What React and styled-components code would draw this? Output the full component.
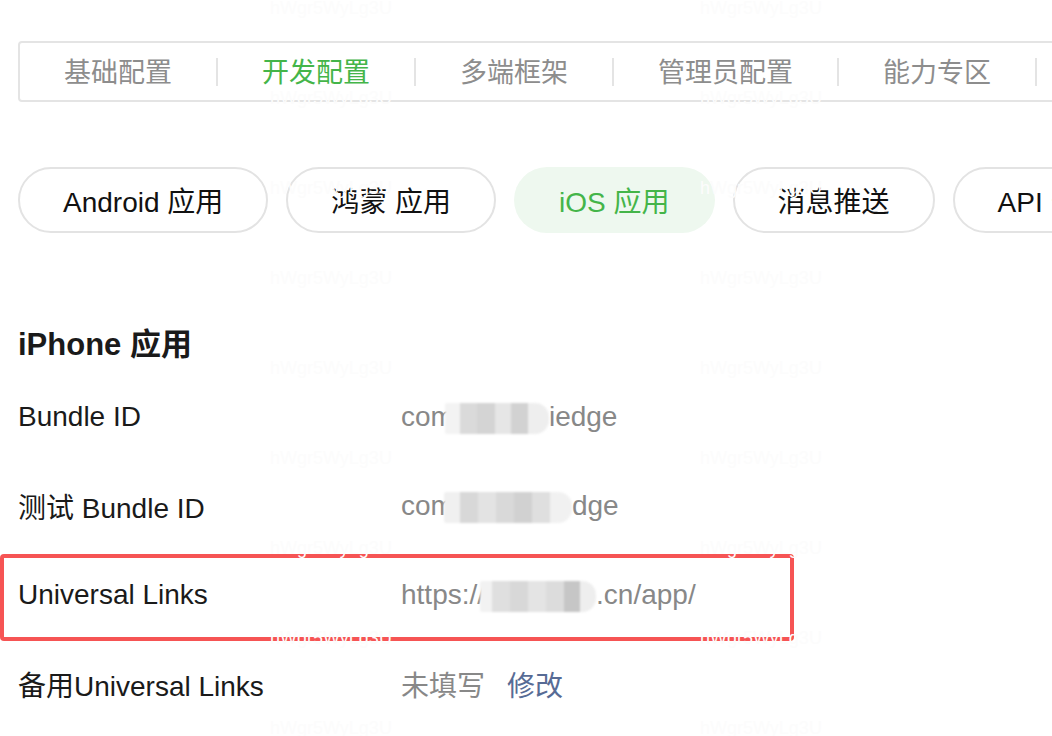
import React from "react";
import styled, { createGlobalStyle, css } from "styled-components";

const Global = createGlobalStyle`
  html, body { margin: 0; padding: 0; background: #fff; }
  body {
    font-family: "Liberation Sans", "Noto Sans CJK SC", sans-serif;
    overflow: hidden;
    -webkit-font-smoothing: antialiased;
  }
`;

const Page = styled.div`
  position: relative;
  width: 1052px;
  height: 736px;
  overflow: hidden;
  padding: 41px 0 0 18px;
  box-sizing: border-box;
`;

const TabBar = styled.nav`
  display: flex;
  align-items: center;
  width: 1150px;
  height: 61px;
  box-sizing: border-box;
  border: 2px solid #e4e4e4;
  border-radius: 4px;
`;

const Tab = styled.div`
  padding: 3px 44px 0;
  font-size: 27px;
  line-height: 54px;
  white-space: nowrap;
  color: ${(p) => (p.$active ? "#44b549" : "#8d8d8d")};
`;

const Divider = styled.span`
  flex: none;
  width: 2px;
  height: 28px;
  background: #e4e4e4;
`;

const PillRow = styled.div`
  display: flex;
  gap: 18px;
  margin-top: 65px;
  width: 1200px;
`;

const Pill = styled.button`
  flex: none;
  height: 66px;
  padding: 0 43px;
  border-radius: 33px;
  box-sizing: border-box;
  font-family: inherit;
  font-size: 28px;
  white-space: nowrap;
  cursor: pointer;
  border: 2px solid ${(p) => (p.$active ? "transparent" : "#e3e3e3")};
  background: ${(p) => (p.$active ? "#eef8ef" : "#fff")};
  color: ${(p) => (p.$active ? "#44b549" : "#111")};
`;

const Heading = styled.h2`
  margin: 90px 0 5px;
  font-size: 31px;
  line-height: 44px;
  font-weight: 700;
  color: #1a1a1a;
`;

const Row = styled.div`
  position: relative;
  display: grid;
  grid-template-columns: 383px 1fr;
  align-items: center;
  height: 89px;
  font-size: 28px;
  ${(p) =>
    p.$highlight &&
    css`
      &::after {
        content: "";
        position: absolute;
        left: -18px;
        top: 4px;
        width: 794px;
        height: 87px;
        box-sizing: border-box;
        border: 4px solid #f65454;
        border-radius: 4px;
        pointer-events: none;
      }
    `}
`;

const Label = styled.div`
  color: #1a1a1a;
  white-space: nowrap;
`;

const Value = styled.div`
  display: flex;
  align-items: center;
  color: #888;
  white-space: nowrap;
`;

const Mosaic = styled.span`
  position: relative;
  display: inline-block;
  height: 31px;
  width: ${(p) => p.$w}px;
  margin: 0 ${(p) => p.$mr || 0}px 0 ${(p) => p.$ml || 0}px;
  border-radius: 2px 14px 14px 2px;
  background: ${(p) => p.$bg};
  filter: blur(0.8px);
  transform: translateY(2px);
`;

const Link = styled.a`
  color: #576b95;
  margin-left: 22px;
  text-decoration: none;
  cursor: pointer;
`;

const Watermarks = styled.div`
  position: absolute;
  inset: 0;
  pointer-events: none;
  display: grid;
  grid-template-columns: repeat(4, 430px);
  grid-auto-rows: 90px;
  margin-left: -160px;
  margin-top: -20px;
`;

const Mark = styled.span`
  font-size: 18px;
  color: #fcfcfc;
  padding-top: 18px;
`;

const mosaicA =
  "linear-gradient(90deg,#f3f3f3 0 15px,#dadada 15px 32px,#d4d4d4 32px 50px,#e6e6e6 50px 66px,#d2d2d2 66px 83px,#eeeeee 83px)";
const mosaicB =
  "linear-gradient(90deg,#f0f0f0 0 16px,#d8d8d8 16px 34px,#e3e3e3 34px 52px,#d9d9d9 52px 70px,#d1d1d1 70px 88px,#dfdfdf 88px 106px,#f1f1f1 106px)";
const mosaicC =
  "linear-gradient(90deg,#f2f2f2 0 12px,#dfdfdf 12px 30px,#d8d8d8 30px 48px,#e4e4e4 48px 66px,#dcdcdc 66px 84px,#c6c6c6 84px 100px,#eeeeee 100px)";

const tabs = ["基础配置", "开发配置", "多端框架", "管理员配置", "能力专区", "更多"];
const pills = ["Android 应用", "鸿蒙 应用", "iOS 应用", "消息推送", "API 安全"];

export default function App() {
  return (
    <>
      <Global />
      <Page>
        <TabBar>
          {tabs.map((t, i) => (
            <React.Fragment key={t}>
              {i > 0 && <Divider />}
              <Tab $active={i === 1}>{t}</Tab>
            </React.Fragment>
          ))}
        </TabBar>

        <PillRow>
          {pills.map((p, i) => (
            <Pill key={p} $active={i === 2}>
              {p}
            </Pill>
          ))}
        </PillRow>

        <Heading>iPhone 应用</Heading>

        <Row>
          <Label>Bundle ID</Label>
          <Value>
            com
            <Mosaic $w={104} $bg={mosaicA} $ml={-9} />
            iedge
          </Value>
        </Row>
        <Row>
          <Label>测试 Bundle ID</Label>
          <Value>
            com
            <Mosaic $w={128} $bg={mosaicB} $ml={-10} />
            dge
          </Value>
        </Row>
        <Row $highlight>
          <Label>Universal Links</Label>
          <Value>
            https://
            <Mosaic $w={116} $bg={mosaicC} $ml={-5} />
            .cn/app/
          </Value>
        </Row>
        <Row>
          <Label>备用Universal Links</Label>
          <Value>
            未填写
            <Link>修改</Link>
          </Value>
        </Row>

        <Watermarks>
          {Array.from({ length: 36 }).map((_, i) => (
            <Mark key={i}>hWgr5WyLg3U</Mark>
          ))}
        </Watermarks>
      </Page>
    </>
  );
}
